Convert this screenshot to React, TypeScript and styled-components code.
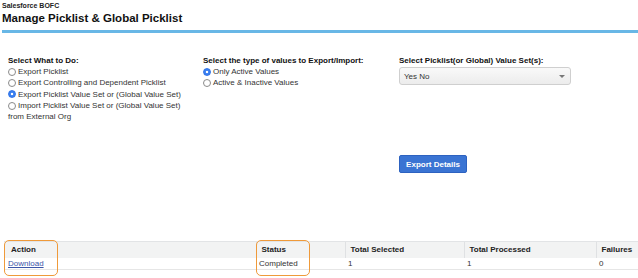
import React from 'react';
import styled, { createGlobalStyle } from 'styled-components';

const GlobalStyle = createGlobalStyle`
  html, body {
    margin: 0;
    padding: 0;
    background: #ffffff;
  }
  body {
    font-family: "Liberation Sans", Arial, Helvetica, sans-serif;
    color: #1a1a1a;
  }
`;

const Page = styled.div`
  width: 638px;
  height: 278px;
  overflow: hidden;
  position: relative;
`;

const Header = styled.div`
  padding: 2px 0 0 2px;
`;

const OrgName = styled.div`
  font-size: 7px;
  font-weight: bold;
  line-height: 8px;
  color: #222;
`;

const Title = styled.h1`
  margin: 0;
  font-size: 11.5px;
  font-weight: bold;
  line-height: 16px;
  color: #111;
`;

const TitleBar = styled.div`
  height: 3px;
  margin: 4px 0 0 2px;
  background: #68b7e6;
`;

const Form = styled.div`
  display: flex;
  margin-top: 22px;
  padding-left: 8px;
`;

const Column = styled.div<{ $width: number }>`
  width: ${(p) => p.$width}px;
  display: flex;
  flex-direction: column;
`;

const Label = styled.div`
  font-size: 8px;
  font-weight: bold;
  line-height: 11px;
  color: #111;
`;

const Option = styled.label`
  display: flex;
  align-items: center;
  gap: 2px;
  font-size: 8px;
  line-height: 11.3px;
  height: 11.3px;
  color: #333;
`;

const Radio = styled.input.attrs({ type: 'radio' })`
  appearance: none;
  margin: 0;
  width: 8px;
  height: 8px;
  border-radius: 50%;
  border: 1px solid #8a8a8a;
  background: #fff;
  box-sizing: border-box;
  flex-shrink: 0;

  &:checked {
    border: 1px solid #2f73e8;
    background: radial-gradient(circle, #ffffff 0 1.3px, #3a7ff0 1.6px);
  }
`;

const Plain = styled.div`
  font-size: 8px;
  line-height: 11.3px;
  color: #333;
`;

const SelectBox = styled.div`
  margin-top: 1px;
  width: 172px;
  height: 18px;
  box-sizing: border-box;
  border: 1px solid #cfcfcf;
  border-radius: 3px;
  background: linear-gradient(#f9f9f9, #ececec);
  display: flex;
  align-items: center;
  justify-content: space-between;
  padding: 0 5px 0 4px;
  font-size: 8px;
  color: #333;
`;

const Caret = styled.span`
  width: 0;
  height: 0;
  border-left: 3px solid transparent;
  border-right: 3px solid transparent;
  border-top: 3px solid #777;
`;

const Button = styled.button`
  margin-top: 70px;
  width: 68px;
  height: 18px;
  padding: 0;
  border: 1px solid #2d62c0;
  border-radius: 2px;
  background: #3a74d3;
  color: #fff;
  font-family: "Liberation Sans", Arial, sans-serif;
  font-size: 8px;
  font-weight: bold;
`;

const TableWrap = styled.div`
  position: absolute;
  left: 4px;
  right: 0;
  top: 241px;
`;

const Table = styled.table`
  width: 100%;
  border-collapse: collapse;
  table-layout: fixed;
  font-size: 8px;
`;

const Th = styled.th`
  box-sizing: border-box;
  height: 16px;
  padding: 0 0 0 5px;
  text-align: left;
  font-weight: bold;
  color: #222;
  background: #f2f3f3;
  border-top: 1px solid #e2e4e6;
  border-left: 1px solid #dfe1e3;
  white-space: nowrap;

  &:first-child {
    border-left: none;
    padding-left: 7px;
  }
`;

const Td = styled.td`
  height: 11px;
  padding: 0 0 0 3px;
  color: #333;
  border-bottom: 1px solid #e6e6e6;

  &:first-child {
    padding-left: 4px;
  }
`;

const Link = styled.a`
  color: #3b55a8;
  text-decoration: underline;
`;

const Highlight = styled.div<{ $left: number; $width: number }>`
  position: absolute;
  top: -1px;
  left: ${(p) => p.$left}px;
  width: ${(p) => p.$width}px;
  height: 36px;
  box-sizing: border-box;
  border: 1.5px solid #ef9a3a;
  border-radius: 5px;
  pointer-events: none;
`;

const columns = [252, 89, 119, 132];

export default function App() {
  return (
    <Page>
      <GlobalStyle />
      <Header>
        <OrgName>Salesforce BOFC</OrgName>
        <Title>Manage Picklist &amp; Global Picklist</Title>
      </Header>
      <TitleBar />

      <Form>
        <Column $width={195}>
          <Label>Select What to Do:</Label>
          <Option><Radio name="what" />Export Picklist</Option>
          <Option><Radio name="what" />Export Controlling and Dependent Picklist</Option>
          <Option><Radio name="what" defaultChecked />Export Picklist Value Set or (Global Value Set)</Option>
          <Option><Radio name="what" />Import Picklist Value Set or (Global Value Set)</Option>
          <Plain>from External Org</Plain>
        </Column>
        <Column $width={196}>
          <Label>Select the type of values to Export/Import:</Label>
          <Option><Radio name="type" defaultChecked />Only Active Values</Option>
          <Option><Radio name="type" />Active &amp; Inactive Values</Option>
        </Column>
        <Column $width={230}>
          <Label>Select Picklist(or Global) Value Set(s):</Label>
          <SelectBox>
            <span>Yes No</span>
            <Caret />
          </SelectBox>
          <Button>Export Details</Button>
        </Column>
      </Form>

      <TableWrap>
        <Table>
          <colgroup>
            {columns.map((w, i) => (
              <col key={i} style={{ width: w }} />
            ))}
            <col />
          </colgroup>
          <thead>
            <tr>
              <Th>Action</Th>
              <Th>Status</Th>
              <Th>Total Selected</Th>
              <Th>Total Processed</Th>
              <Th>Failures</Th>
            </tr>
          </thead>
          <tbody>
            <tr>
              <Td><Link href="#">Download</Link></Td>
              <Td>Completed</Td>
              <Td>1</Td>
              <Td>1</Td>
              <Td>0</Td>
            </tr>
          </tbody>
        </Table>
        <Highlight $left={0} $width={54} />
        <Highlight $left={252} $width={54} />
      </TableWrap>
    </Page>
  );
}
